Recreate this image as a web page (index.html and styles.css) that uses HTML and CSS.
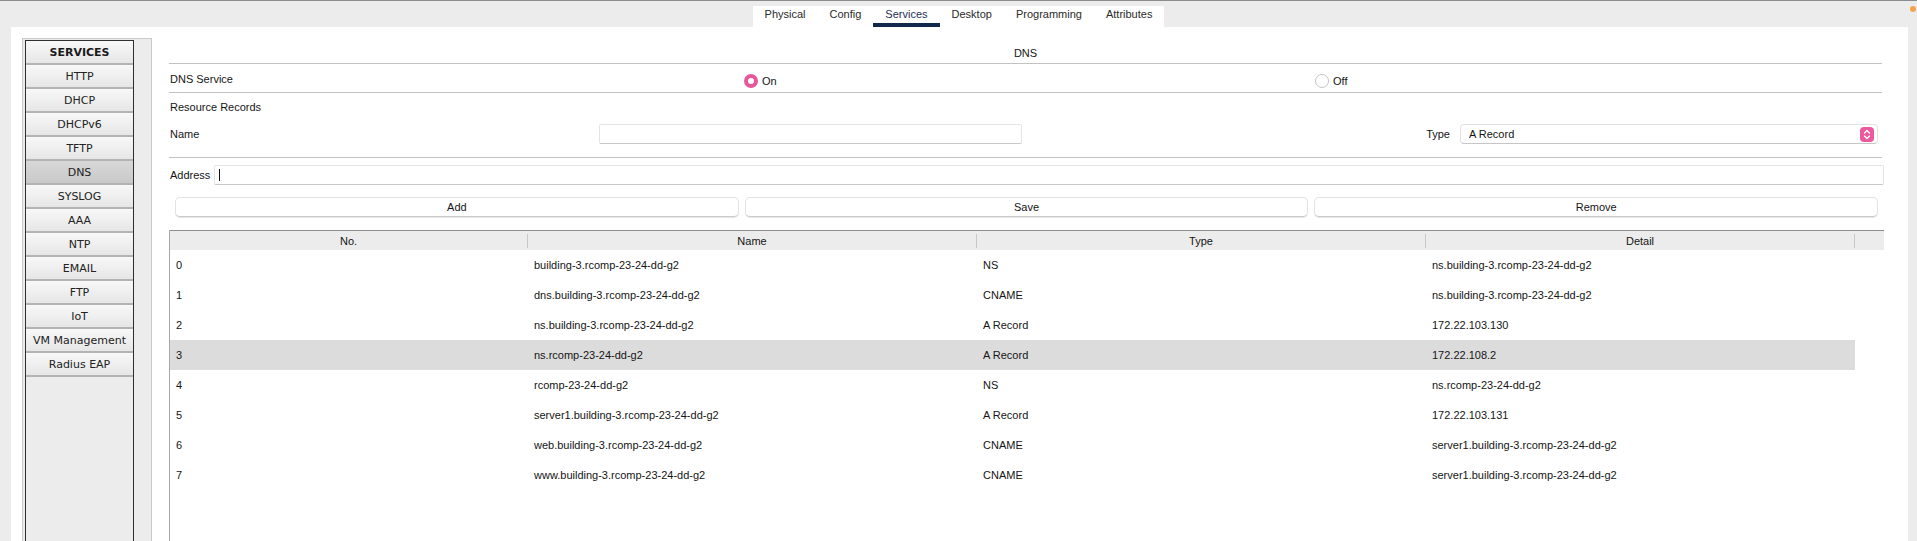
FILE: index.html
```html
<!DOCTYPE html>
<html>
<head>
<meta charset="utf-8">
<link rel="stylesheet" href="styles.css">
</head>
<body>
<div class="topbar">
  <div class="tabs">
    <div class="tab">Physical</div>
    <div class="tab">Config</div>
    <div class="tab active">Services</div>
    <div class="tab">Desktop</div>
    <div class="tab">Programming</div>
    <div class="tab">Attributes</div>
  </div>
  <span class="dot"></span>
</div>
<div class="window">
  <div class="sidebar">
    <div class="svc-list">
      <div class="svc-head">SERVICES</div>
      <div class="svc">HTTP</div>
      <div class="svc">DHCP</div>
      <div class="svc">DHCPv6</div>
      <div class="svc">TFTP</div>
      <div class="svc selected">DNS</div>
      <div class="svc">SYSLOG</div>
      <div class="svc">AAA</div>
      <div class="svc">NTP</div>
      <div class="svc">EMAIL</div>
      <div class="svc">FTP</div>
      <div class="svc">IoT</div>
      <div class="svc">VM Management</div>
      <div class="svc">Radius EAP</div>
    </div>
  </div>
  <div class="content">
    <div class="title">DNS</div>
    <div class="row service-row">
      <div class="cell label-cell">DNS Service</div>
      <div class="cell radio-cell"><span class="radio on"></span>On</div>
      <div class="cell radio-cell"><span class="radio"></span>Off</div>
    </div>
    <div class="rr-label">Resource Records</div>
    <div class="row name-row">
      <div class="name-label">Name</div>
      <div class="input name-input"></div>
      <div class="type-label">Type</div>
      <div class="select">
        <span class="select-text">A Record</span>
        <span class="select-btn">
          <svg width="8" height="11" viewBox="0 0 8 11"><path d="M1.5 4 L4 1.5 L6.5 4 M1.5 7 L4 9.5 L6.5 7" fill="none" stroke="#fff" stroke-width="1.3" stroke-linecap="round" stroke-linejoin="round"/></svg>
        </span>
      </div>
    </div>
    <div class="row addr-row">
      <div class="addr-label">Address</div>
      <div class="input addr-input"><span class="caret"></span></div>
    </div>
    <div class="btn-row">
      <div class="btn">Add</div>
      <div class="btn">Save</div>
      <div class="btn">Remove</div>
    </div>
    <div class="table">
      <div class="thead">
        <div class="th">No.</div>
        <div class="th">Name</div>
        <div class="th">Type</div>
        <div class="th">Detail</div>
        <div class="th last"></div>
      </div>
      <div class="tr"><div>0</div><div>building-3.rcomp-23-24-dd-g2</div><div>NS</div><div>ns.building-3.rcomp-23-24-dd-g2</div></div>
      <div class="tr"><div>1</div><div>dns.building-3.rcomp-23-24-dd-g2</div><div>CNAME</div><div>ns.building-3.rcomp-23-24-dd-g2</div></div>
      <div class="tr"><div>2</div><div>ns.building-3.rcomp-23-24-dd-g2</div><div>A Record</div><div>172.22.103.130</div></div>
      <div class="tr sel"><div>3</div><div>ns.rcomp-23-24-dd-g2</div><div>A Record</div><div>172.22.108.2</div></div>
      <div class="tr"><div>4</div><div>rcomp-23-24-dd-g2</div><div>NS</div><div>ns.rcomp-23-24-dd-g2</div></div>
      <div class="tr"><div>5</div><div>server1.building-3.rcomp-23-24-dd-g2</div><div>A Record</div><div>172.22.103.131</div></div>
      <div class="tr"><div>6</div><div>web.building-3.rcomp-23-24-dd-g2</div><div>CNAME</div><div>server1.building-3.rcomp-23-24-dd-g2</div></div>
      <div class="tr"><div>7</div><div>www.building-3.rcomp-23-24-dd-g2</div><div>CNAME</div><div>server1.building-3.rcomp-23-24-dd-g2</div></div>
    </div>
  </div>
  <div class="rightstrip"></div>
</div>
</body>
</html>
```
FILE: styles.css
```css
html, body {
  margin: 0;
  padding: 0;
  height: 541px;
  overflow: hidden;
}
body {
  background: #ececec;
  font-family: "Liberation Sans", Arial, sans-serif;
  font-size: 11px;
  color: #151515;
}
.topbar {
  height: 26px;
  border-top: 1px solid #8c8c8c;
  display: flex;
  justify-content: center;
  position: relative;
}
.tabs {
  margin-top: 5px;
  height: 21px;
  background: #fff;
  display: flex;
}
.tab {
  padding: 0 12px;
  line-height: 17px;
  color: #2a2a2a;
  font-size: 11px;
}
.tab.active {
  color: #1f3156;
  border-bottom: 4px solid #13294b;
}
.dot {
  position: absolute;
  right: 1px;
  top: 5px;
  width: 6px;
  height: 6px;
  border-radius: 50%;
  background: #f6a24c;
}
.window {
  margin-left: 11px;
  height: 514px;
  background: #fff;
  display: flex;
}
.sidebar {
  margin: 11px 0 0 11px;
  width: 130px;
  background: #ececec;
  border-left: 1px solid #c9c9c9;
  border-top: 1px solid #c9c9c9;
  border-right: 1px solid #c9c9c9;
  box-sizing: border-box;
  padding: 1px 17px 0 2px;
  display: flex;
}
.svc-list {
  flex: 1;
  border: 1px solid #2f2f2f;
  border-bottom: none;
  background: #ececec;
  font-family: "DejaVu Sans", Verdana, sans-serif;
  font-size: 11px;
  color: #222;
}
.svc-head, .svc {
  height: 22px;
  line-height: 23px;
  text-align: center;
  border-bottom: 2px solid #b3b3b3;
  background: linear-gradient(#f8f8f8, #e6e6e6);
}
.svc-head {
  font-weight: bold;
  font-size: 11px;
  color: #1a1a1a;
}
.svc.selected {
  background: linear-gradient(#d8d8d8, #c9c9c9);
}
.content {
  margin-left: 17px;
  width: 1715px;
  display: flex;
  flex-direction: column;
}
.title {
  margin-top: 17px;
  height: 19px;
  line-height: 18px;
  text-align: center;
  border-bottom: 1px solid #c2c2c2;
  margin-right: 2px;
}
.row {
  display: flex;
  align-items: center;
  margin-right: 2px;
}
.service-row {
  height: 28px;
  border-bottom: 1px solid #c2c2c2;
}
.service-row .cell {
  flex: 1;
  display: flex;
  align-items: center;
  padding-left: 1px;
}
.service-row .label-cell {
  padding-top: 1px;
}
.service-row .radio-cell {
  padding-top: 5px;
}
.radio {
  width: 14px;
  height: 14px;
  box-sizing: border-box;
  border-radius: 50%;
  border: 1px solid #c4c4c4;
  background: #fff;
  margin: 0 4px 0 3px;
}
.radio.on {
  border: 4px solid #e9579b;
}
.rr-label {
  height: 16px;
  line-height: 16px;
  margin-top: 6px;
  padding-left: 1px;
}
.name-row {
  margin-top: 4px;
  height: 30px;
  border-bottom: 1px solid #c2c2c2;
  padding-bottom: 8px;
}
.name-label {
  width: 429px;
  padding-left: 1px;
}
.input {
  height: 20px;
  box-sizing: border-box;
  background: #fff;
  border: 1px solid #e4e4e4;
  border-bottom-color: #c8c8c8;
  border-radius: 2px;
}
.name-input {
  width: 423px;
}
.type-label {
  margin-left: auto;
  margin-right: 10px;
}
.select {
  width: 418px;
  height: 20px;
  box-sizing: border-box;
  border: 1px solid #e2e2e2;
  border-bottom-color: #c6c6c6;
  border-radius: 4px;
  display: flex;
  align-items: center;
  margin-right: 4px;
}
.select-text {
  padding-left: 8px;
  flex: 1;
}
.select-btn {
  width: 14px;
  height: 15px;
  border-radius: 4px;
  background: #ea5a9d;
  display: flex;
  align-items: center;
  justify-content: center;
  margin-right: 3px;
}
.addr-row {
  margin-top: 7px;
  height: 20px;
  margin-right: 0;
}
.addr-label {
  width: 44px;
  padding-left: 1px;
}
.addr-input {
  flex: 1;
  display: flex;
  align-items: center;
  padding-left: 4px;
}
.caret {
  width: 1px;
  height: 12px;
  background: #111;
}
.btn-row {
  display: flex;
  gap: 6px;
  margin: 12px 6px 0 6px;
}
.btn {
  flex: 1;
  height: 20px;
  line-height: 19px;
  box-sizing: border-box;
  text-align: center;
  background: #fff;
  border: 1px solid #e3e3e3;
  border-bottom-color: #cbcbcb;
  border-radius: 5px;
  box-shadow: 0 1px 0 #e6e6e6;
}
.table {
  margin-top: 13px;
  flex: 1;
  border-left: 1px solid #a8a8a8;
}
.thead {
  display: grid;
  grid-template-columns: 358px 449px 449px 429px 29px;
  height: 20px;
  box-sizing: border-box;
  background: #ececec;
  border-top: 1px solid #8e8e8e;
  align-items: center;
}
.th {
  text-align: center;
  border-right: 1px solid #c8c8c8;
  line-height: 14px;
}
.th.last {
  border-right: none;
}
.tr {
  display: grid;
  grid-template-columns: 358px 449px 449px 429px;
  height: 30px;
  align-items: center;
  width: 1685px;
}
.tr div {
  padding-left: 6px;
}
.tr.sel {
  background: #dcdcdc;
}
.rightstrip {
  margin-left: auto;
  width: 9px;
  background: #ececec;
}
```
